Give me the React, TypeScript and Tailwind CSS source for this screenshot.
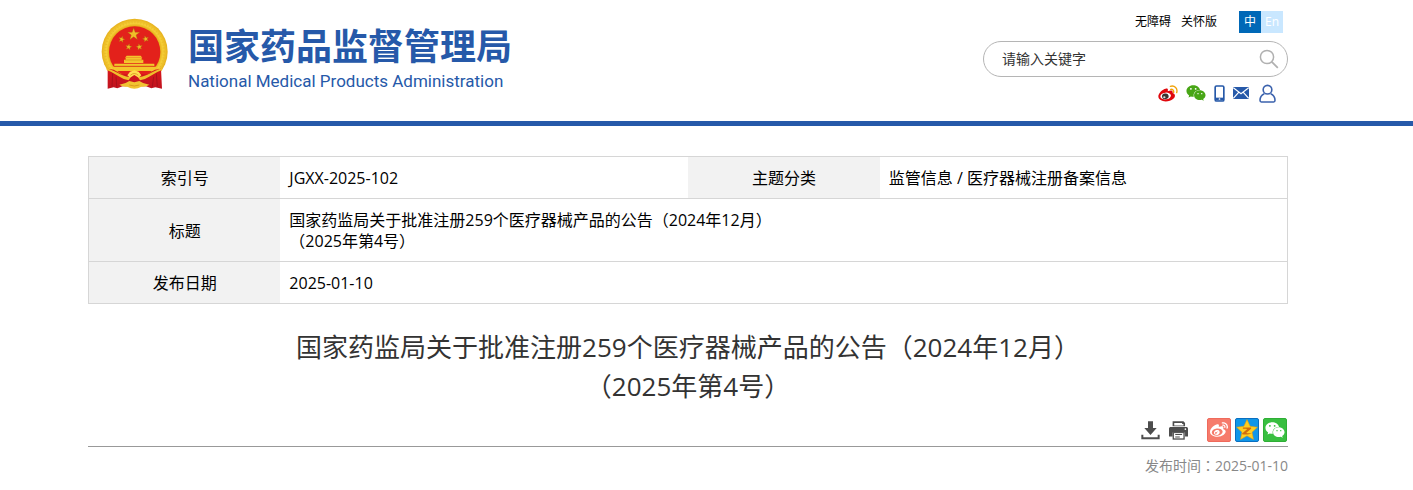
import React from "react";
import { FaWeibo, FaWeixin } from "react-icons/fa";

const starPoints = (cx: number, cy: number, r: number, inner = 0.4, turn = 0) =>
  Array.from({ length: 10 }, (_, i) => {
    const radius = i % 2 === 0 ? r : r * inner;
    const a = ((i * 36 - 90 + turn) * Math.PI) / 180;
    return `${(cx + radius * Math.cos(a)).toFixed(1)},${(cy + radius * Math.sin(a)).toFixed(1)}`;
  }).join(" ");

function Emblem() {
  return (
    <svg viewBox="33 24 201 216" className="h-18 w-[67px] shrink-0" aria-hidden="true">
      <defs>
        <radialGradient id="gold" cx="0.5" cy="0.5" r="0.5">
          <stop offset="0.76" stopColor="#e3a812" />
          <stop offset="0.86" stopColor="#f6d038" />
          <stop offset="1" stopColor="#e6b01c" />
        </radialGradient>
        <linearGradient id="drape" x1="0" y1="0" x2="0" y2="1">
          <stop offset="0" stopColor="#d8161a" />
          <stop offset="1" stopColor="#c01420" />
        </linearGradient>
      </defs>
      <circle cx="134" cy="125" r="99" fill="url(#gold)" />
      <circle cx="134" cy="125" r="88" fill="none" stroke="#d99a10" strokeWidth="6" strokeDasharray="2 7" opacity="0.35" />
      <circle cx="134" cy="126" r="77" fill="#e3211b" />
      <g fill="#f0bd28" stroke="#a8600c" strokeWidth="1">
        <polygon points={starPoints(131, 73, 19)} />
        <polygon points={starPoints(95, 88, 10, 0.4, 15)} />
        <polygon points={starPoints(167, 87, 10, 0.4, -15)} />
        <polygon points={starPoints(116, 111, 10, 0.4, 10)} />
        <polygon points={starPoints(148, 111, 10, 0.4, -10)} />
      </g>
      <g fill="#f4c52c">
        <path d="M110 137h42l5 6h-52z" />
        <path d="M107 144h48v5h5v10h-58v-10h5z" />
        <path d="M73 161h120v7H73z" />
        <path d="M66 170h136l-9 13H76z" />
      </g>
      <path d="M105 150h52M76 168h114" stroke="#c97a12" strokeWidth="1.500" />
      <path d="M53 176l18 3 24 14h76l24-14 18-3 3 60-20-4-12 3-16-6H98l-16 6-11-3-18 4z" fill="url(#drape)" />
      <path d="M68 190l-2 40M78 200l2 30M191 200l-4 30M199 190l3 40" stroke="#97101a" strokeWidth="2" fill="none" />
      <path d="M50 174q26 10 44 20 16 6 28 8l-6 9q-16-2-30-12-20-14-36-19zM216 174q-26 10-44 20-16 6-28 8l6 9q16-2 30-12 20-14 36-19z" fill="#efbf2b" />
      <path d="M88 224q18-2 30-11l15 4 15-4q12 9 30 11-10 8-24 6-10 6-21 6t-21-6q-14 2-24-6z" fill="#f1c331" />
      <path d="M112 196l8-11 13-4 13 4 8 11-8 7-13-8-13 8z" fill="#ffdc50" />
      <path d="M121 196q12-11 24 0" stroke="#cf8614" strokeWidth="2" fill="none" />
      <path d="M118 225q15 6 30 0" stroke="#cf8614" strokeWidth="2" fill="none" />
    </svg>
  );
}

function WeiboIcon() {
  return (
    <svg viewBox="112 254 60 51" className="h-[17px] w-5" aria-hidden="true">
      <path
        d="M113 288c0-9 13-22 22-23 6-1 8 2 6 8 8-4 17-4 15 5 9 3 9 12 1 18-12 11-44 10-44-8z"
        fill="#e0070d"
      />
      <ellipse cx="135" cy="287" rx="16" ry="10" fill="#fff" transform="rotate(-7 135 287)" />
      <ellipse cx="134" cy="288" rx="10" ry="8.500" fill="#3a3432" transform="rotate(-15 134 288)" />
      <ellipse cx="131" cy="291" rx="3.500" ry="3" fill="#ddd" />
      <path d="M149 258c13-4 23 7 19 19M150 267c6-1 10 3 9 9" fill="none" stroke="#f0a30a" strokeWidth="4" strokeLinecap="round" />
    </svg>
  );
}

function PhoneIcon() {
  return (
    <svg viewBox="281 253 32 51" className="h-[17px] w-[11px]" aria-hidden="true">
      <rect x="284" y="256" width="26" height="45" rx="4" fill="none" stroke="#2659a9" strokeWidth="5" />
      <path d="M284 291h26v8h-26z" fill="#2659a9" />
      <circle cx="297" cy="295" r="2.600" fill="#fff" />
    </svg>
  );
}

function MailIcon() {
  return (
    <svg viewBox="339 263 48 36" className="h-3 w-4" aria-hidden="true">
      <rect x="339" y="263" width="48" height="36" rx="2" fill="#2659a9" />
      <path d="M340 265l23 18 23-18M340 297l16-18M386 297l-16-18" fill="none" stroke="#fff" strokeWidth="3.400" />
    </svg>
  );
}

function UserIcon() {
  return (
    <svg viewBox="418 250 51 57" className="h-[19px] w-[17px]" aria-hidden="true">
      <g fill="none" stroke="#3b62ad" strokeWidth="4.800" strokeLinejoin="round">
        <circle cx="443.500" cy="267" r="13" />
        <path d="M434 279c-9 4-13 11-13 20 0 3 1 5 4 5h37c3 0 4-2 4-5 0-9-4-16-13-20" />
      </g>
    </svg>
  );
}

function SearchIcon() {
  return (
    <svg viewBox="0 0 20 20" className="size-5" aria-hidden="true">
      <g fill="none" stroke="#b0b0b0" strokeWidth="1.500">
        <circle cx="8" cy="8" r="6.600" />
        <path d="M12.800 12.800L18.800 18.800" strokeWidth="1.800" />
      </g>
    </svg>
  );
}

function DownloadIcon() {
  return (
    <svg viewBox="32 32 57 57" className="size-[19px]" aria-hidden="true">
      <g fill="#4d4d4d">
        <path d="M53 33h15v20h11L60.500 74 42 53h11z" />
        <path d="M33 73h6v8h43v-8h6v14H33z" />
      </g>
    </svg>
  );
}

function PrintIcon() {
  return (
    <svg viewBox="116 32 58 58" className="size-[19px]" aria-hidden="true">
      <path d="M127 33h33l5 5v10h-38z" fill="#4d4d4d" />
      <path d="M132 38h24v3h4v5h-28z" fill="#fff" />
      <path d="M122 50h46c4 0 6 2 6 6v23h-9V67h-38v12h-11V56c0-4 2-6 6-6z" fill="#4d4d4d" />
      <path d="M127 66h37v23h-37z" fill="#4d4d4d" />
      <path d="M131 69h29v16h-29z" fill="#fff" />
      <path d="M135 72h21v3h-21zM135 79h14v3h-14z" fill="#4d4d4d" />
      <circle cx="166" cy="57" r="2.500" fill="#fff" />
    </svg>
  );
}

function QzoneIcon() {
  return (
    <svg viewBox="0 0 24 24" className="size-6" aria-hidden="true">
      <polygon points={starPoints(12, 12.6, 12, 0.48)} fill="#ffce1f" stroke="#e89b0a" strokeWidth="0.600" strokeLinejoin="round" />
      <path d="M7.500 9.300h9v1.300l-5.500 4.600c2.200.4 4.200.4 6.300 0-2.600 1.700-6.400 2-10.600 1.400v-.9l5.600-4.800c-1.700-.3-3.200-.4-4.800-.3z" fill="#d06c0c" />
    </svg>
  );
}

function NoticeTitle() {
  return (
    <>
      国家药监局关于批准注册259个医疗器械产品的公告（2024年12月）
      <br />
      （2025年第4号）
    </>
  );
}

const labelCell = "w-[16%] bg-[#f2f2f2] px-2 pt-[11px] pb-[9px] text-center font-normal";
const valueCell = "px-[9px] pt-[11px] pb-[9px]";

export default function App() {
  return (
    <div className="bg-white font-['Open_Sans','Noto_Sans_CJK_SC',sans-serif] text-black" lang="zh-CN">
      <header className="border-b-5 border-[#2659a9] pr-[37px]">
        <div className="mx-auto flex max-w-[1200px] justify-between pb-[18px]">
          <a href="#home" className="flex gap-5 pt-[18px] pl-[13px] text-[#2659a9]">
            <Emblem />
            <span className="flex flex-col pt-[9px]">
              <span className="text-4xl leading-10 font-bold whitespace-nowrap">国家药品监督管理局</span>
              <span className="font-[Roboto,sans-serif] text-[17px] leading-7 whitespace-nowrap">
                National Medical Products Administration
              </span>
            </span>
          </a>
          <div className="flex w-[305px] flex-col pt-[11px]">
            <div className="flex h-[22px] items-center justify-end pr-[5px] text-xs">
              <a href="#accessible" className="mr-[10px]">无障碍</a>
              <a href="#care" className="mr-[22px]">关怀版</a>
              <a href="#zh" className="size-[22px] bg-[#0068b7] text-center leading-[22px] text-white">中</a>
              <a href="#en" className="size-[22px] bg-[#c9e7ff] text-center leading-[22px] text-white">En</a>
            </div>
            <form className="mt-2 flex h-9 items-center rounded-full border border-[#b5b5b5] pr-2 pl-[18px]" onSubmit={(e) => e.preventDefault()}>
              <input
                type="text"
                aria-label="请输入关键字"
                placeholder="请输入关键字"
                className="min-w-0 flex-1 bg-transparent text-sm outline-none placeholder:text-[#333]"
              />
              <button type="submit" aria-label="搜索">
                <SearchIcon />
              </button>
            </form>
            <nav className="mt-[6px] flex h-5 items-center justify-end pr-3">
              <a href="#weibo" aria-label="微博" className="mr-2"><WeiboIcon /></a>
              <a href="#wechat" aria-label="微信" className="mr-2"><FaWeixin className="size-5 text-[#48a616]" /></a>
              <a href="#mobile" aria-label="手机" className="mr-2"><PhoneIcon /></a>
              <a href="#mail" aria-label="邮箱" className="mr-[10px]"><MailIcon /></a>
              <a href="#user" aria-label="用户"><UserIcon /></a>
            </nav>
          </div>
        </div>
      </header>

      <main className="pr-[37px]">
        <div className="mx-auto max-w-[1200px] pt-[30px]">
          <table className="w-full table-fixed border-collapse border border-[#d6d6d6] text-base leading-[21px]">
            <tbody>
              <tr className="border-b border-[#d6d6d6]">
                <th scope="row" className={labelCell}>索引号</th>
                <td className={valueCell}>JGXX-2025-102</td>
                <th scope="row" className={labelCell}>主题分类</th>
                <td className={valueCell}>监管信息 / 医疗器械注册备案信息</td>
              </tr>
              <tr className="border-b border-[#d6d6d6]">
                <th scope="row" className={labelCell}>标题</th>
                <td className={valueCell} colSpan={3}>
                  <NoticeTitle />
                </td>
              </tr>
              <tr>
                <th scope="row" className={labelCell}>发布日期</th>
                <td className={valueCell} colSpan={3}>2025-01-10</td>
              </tr>
            </tbody>
          </table>

          <h1 className="mt-6 text-center text-[26px] leading-[39px] text-[#333]">
            <NoticeTitle />
          </h1>

          <div className="mt-3 flex items-center justify-end border-b border-[#999] pr-px pb-1">
            <button type="button" aria-label="下载" className="mr-[9px]"><DownloadIcon /></button>
            <button type="button" aria-label="打印" className="mr-[19px]"><PrintIcon /></button>
            <div className="flex gap-1">
              <a href="#share-weibo" aria-label="分享到微博" className="flex size-6 items-center justify-center rounded-xs border border-[#ef6a5c] bg-[#f67b6b]">
                <FaWeibo className="size-[18px] text-white" />
              </a>
              <a href="#share-qzone" aria-label="分享到QQ空间" className="flex size-6 items-center justify-center rounded-xs border border-[#0a6fc0] bg-[#1096e8]">
                <QzoneIcon />
              </a>
              <a href="#share-wechat" aria-label="分享到微信" className="flex size-6 items-center justify-center rounded-xs border border-[#2fae36] bg-[#38bf40]">
                <FaWeixin className="size-5 text-white" />
              </a>
            </div>
          </div>
          <p className="pt-[9px] text-right text-sm leading-5 text-[#888]">
            发布时间<span lang="zh-TW" className="font-['Noto_Sans_CJK_TC',sans-serif] leading-none">：</span>2025-01-10
          </p>
        </div>
      </main>
    </div>
  );
}
